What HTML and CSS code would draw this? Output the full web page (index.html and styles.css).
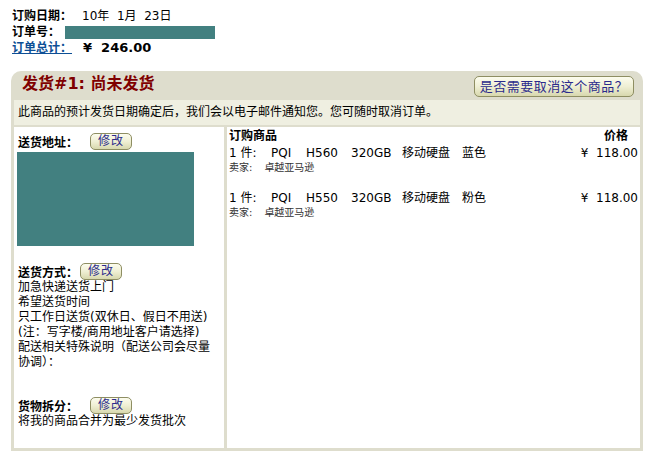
FILE: index.html
```html
<!DOCTYPE html>
<html lang="zh-CN">
<head>
<meta charset="utf-8">
<title>订单详情</title>
<link rel="stylesheet" href="styles.css">
</head>
<body>
<div class="summary">
  <div class="sum-row"><span class="sum-label">订购日期：</span><span class="sum-date">10年&nbsp;&nbsp;1月&nbsp;&nbsp;23日</span></div>
  <div class="sum-row"><span class="sum-label">订单号：</span><span class="redacted order-no"></span></div>
  <div class="sum-row"><a class="sum-label sum-link" href="#">订单总计：</a><span class="sum-total">¥&nbsp;&nbsp;246.00</span></div>
</div>

<div class="shipment">
  <div class="ship-head">
    <h2 class="ship-title">发货#1: 尚未发货</h2>
    <button class="pill pill-lg" type="button">是否需要取消这个商品？</button>
  </div>
  <div class="ship-notice">此商品的预计发货日期确定后，我们会以电子邮件通知您。您可随时取消订单。</div>
  <div class="ship-body">
    <div class="ship-info">
      <div class="field-row">
        <span class="field-label">送货地址：</span>
        <button class="pill pill-sm" type="button">修改</button>
      </div>
      <div class="redacted address"></div>

      <div class="field-row field-row-method">
        <span class="field-label">送货方式：</span>
        <button class="pill pill-sm pill-tight" type="button">修改</button>
      </div>
      <div class="field-text">
        加急快递送货上门<br>
        希望送货时间<br>
        只工作日送货(双休日、假日不用送)<br>
        (注：写字楼/商用地址客户请选择)<br>
        配送相关特殊说明（配送公司会尽量<br>
        协调）：
      </div>

      <div class="field-row field-row-split">
        <span class="field-label">货物拆分：</span>
        <button class="pill pill-sm" type="button">修改</button>
      </div>
      <div class="field-text">将我的商品合并为最少发货批次</div>
    </div>

    <div class="ship-items">
      <div class="items-head">
        <span>订购商品</span>
        <span class="price-head">价格</span>
      </div>
      <div class="item">
        <div class="item-line">
          <span class="item-name"><span class="tok tok-qty">1 件:</span><span class="tok tok-brand">PQI</span><span class="tok tok-model">H560</span><span class="tok tok-cap">320GB</span><span class="tok tok-type">移动硬盘</span><span class="tok">蓝色</span></span>
          <span class="item-price">¥&nbsp;&nbsp;118.00</span>
        </div>
        <div class="seller"><span class="seller-label">卖家:</span><span class="seller-name">卓越亚马逊</span></div>
      </div>
      <div class="item">
        <div class="item-line">
          <span class="item-name"><span class="tok tok-qty">1 件:</span><span class="tok tok-brand">PQI</span><span class="tok tok-model">H550</span><span class="tok tok-cap">320GB</span><span class="tok tok-type">移动硬盘</span><span class="tok">粉色</span></span>
          <span class="item-price">¥&nbsp;&nbsp;118.00</span>
        </div>
        <div class="seller"><span class="seller-label">卖家:</span><span class="seller-name">卓越亚马逊</span></div>
      </div>
    </div>
  </div>
</div>
</body>
</html>
```

FILE: styles.css
```css
html, body {
  margin: 0;
  padding: 0;
  background: #ffffff;
}

body {
  font-family: "DejaVu Sans", "Noto Sans CJK SC", sans-serif;
  font-size: 12px;
  color: #000000;
}

/* ---------- order summary ---------- */
.summary {
  padding: 8px 0 0 12px;
}

.sum-row {
  display: flex;
  align-items: center;
  height: 16px;
  line-height: 16px;
}

.sum-label {
  font-weight: bold;
}

.sum-link {
  color: #0d4f95;
  text-decoration: underline;
}

.sum-date {
  margin-left: 10px;
}

.sum-total {
  margin-left: 11px;
  font-weight: bold;
  font-size: 13px;
}

.redacted {
  background: #428080;
}

.order-no {
  display: inline-block;
  width: 150px;
  height: 13px;
  margin-left: 5px;
}

/* ---------- shipment box ---------- */
.shipment {
  margin: 15px 12px 0 11px;
  background: #deddcd;
  border-radius: 10px 10px 0 0;
  padding: 0 3px 3px 3px;
}

.ship-head {
  display: flex;
  justify-content: space-between;
  align-items: flex-start;
  height: 29px;
  padding: 0 6px 0 8px;
}

.ship-title {
  margin: 0;
  padding-top: 3px;
  font-size: 16px;
  line-height: 20px;
  font-weight: bold;
  color: #7f0000;
}

.pill {
  font-family: "DejaVu Sans", "Noto Sans CJK SC", sans-serif;
  color: #2b2b8c;
  background: linear-gradient(#fcfcee 0%, #efefd4 50%, #d8d8ae 100%);
  border: 1px solid #8e8e62;
  border-radius: 5px;
  padding: 0;
  cursor: pointer;
}

.pill-lg {
  margin-top: 5px;
  width: 160px;
  height: 21px;
  font-size: 13px;
  line-height: 19px;
  letter-spacing: 0.5px;
}

.pill-sm {
  width: 42px;
  height: 17px;
  font-size: 12px;
  line-height: 15px;
  letter-spacing: 1px;
  margin-left: 12px;
}

.pill-tight {
  margin-left: 2px;
}

.ship-notice {
  background: #efefe1;
  height: 25px;
  line-height: 25px;
  padding-left: 4px;
  margin-bottom: 2px;
}

.ship-body {
  display: grid;
  grid-template-columns: 210px 1fr;
  column-gap: 3px;
  height: 321px;
}

.ship-info,
.ship-items {
  background: #ffffff;
}

/* ---------- left column ---------- */
.ship-info {
  padding: 6px 3px 0 3px;
}

.field-row {
  display: flex;
  align-items: center;
  height: 17px;
}

.field-label {
  font-weight: bold;
  padding-left: 1px;
}

.address {
  width: 177px;
  height: 94px;
  margin-top: 2px;
}

.field-row-method {
  margin-top: 17px;
}

.field-row-split {
  margin-top: 27px;
}

.field-text {
  line-height: 15px;
  padding-left: 1px;
}

/* ---------- right column ---------- */
.ship-items {
  padding: 2px 2px 0 2px;
}

.items-head {
  display: flex;
  justify-content: space-between;
  line-height: 15px;
  font-weight: bold;
  margin-bottom: 2px;
}

.price-head {
  padding-right: 10px;
}

.item {
  margin-bottom: 16px;
}

.item-line {
  display: flex;
  justify-content: space-between;
  line-height: 15px;
}

.tok {
  display: inline-block;
}

.tok-qty { width: 42px; }
.tok-brand { width: 35px; }
.tok-model { width: 45px; }
.tok-cap { width: 51px; }
.tok-type { width: 60px; }

.seller {
  font-size: 10px;
  line-height: 14px;
  color: #333333;
}

.seller-name {
  margin-left: 12px;
}
```
